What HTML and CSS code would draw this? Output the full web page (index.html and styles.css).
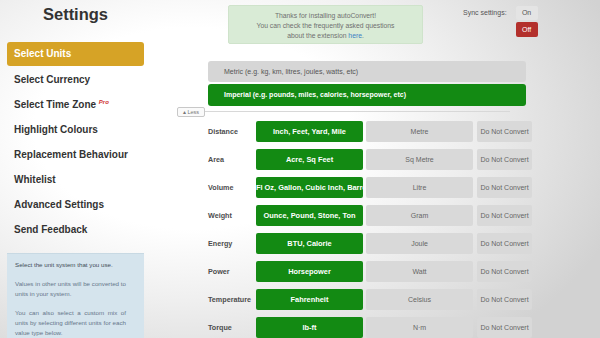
FILE: index.html
```html
<!DOCTYPE html>
<html lang="en">
<head>
  <meta charset="UTF-8">
  <meta name="viewport" content="width=device-width, initial-scale=1.0">
  <title>autoConvert Settings</title>
  <link rel="stylesheet" href="styles.css">
</head>
<body>
  <div class="page">
    <aside class="sidebar">
      <h1>Settings</h1>
      <nav class="menu">
        <a class="menu-item active">Select Units</a>
        <a class="menu-item">Select Currency</a>
        <a class="menu-item">Select Time Zone <sup class="pro">Pro</sup></a>
        <a class="menu-item">Highlight Colours</a>
        <a class="menu-item">Replacement Behaviour</a>
        <a class="menu-item">Whitelist</a>
        <a class="menu-item">Advanced Settings</a>
        <a class="menu-item">Send Feedback</a>
      </nav>
      <div class="help">
        <p class="help-lead">Select the unit system that you use.</p>
        <p>Values in other units will be converted to units in your system.</p>
        <p>You can also select a custom mix of units by selecting different units for each value type below.</p>
      </div>
    </aside>

    <main class="content">
      <div class="topbar">
        <div class="notice">
          Thanks for installing autoConvert!<br>
          You can check the frequently asked questions<br>
          about the extension <a href="#">here</a>.
        </div>
        <div class="sync">
          <span class="sync-label">Sync settings:</span>
          <div class="toggle">
            <span class="toggle-btn">On</span>
            <span class="toggle-btn off">Off</span>
          </div>
        </div>
      </div>

      <div class="systems">
        <div class="system">Metric (e.g. kg, km, litres, joules, watts, etc)</div>
        <div class="system selected">Imperial (e.g. pounds, miles, calories, horsepower, etc)</div>
      </div>

      <div class="divider">
        <span class="less">&#9652; Less</span>
        <span class="rule"></span>
      </div>

      <div class="units">
        <div class="unit-row">
          <span class="unit-label">Distance</span>
          <span class="opt selected">Inch, Feet, Yard, Mile</span>
          <span class="opt">Metre</span>
          <span class="opt none">Do Not Convert</span>
        </div>
        <div class="unit-row">
          <span class="unit-label">Area</span>
          <span class="opt selected">Acre, Sq Feet</span>
          <span class="opt">Sq Metre</span>
          <span class="opt none">Do Not Convert</span>
        </div>
        <div class="unit-row">
          <span class="unit-label">Volume</span>
          <span class="opt selected">Fl Oz, Gallon, Cubic Inch, Barrel</span>
          <span class="opt">Litre</span>
          <span class="opt none">Do Not Convert</span>
        </div>
        <div class="unit-row">
          <span class="unit-label">Weight</span>
          <span class="opt selected">Ounce, Pound, Stone, Ton</span>
          <span class="opt">Gram</span>
          <span class="opt none">Do Not Convert</span>
        </div>
        <div class="unit-row">
          <span class="unit-label">Energy</span>
          <span class="opt selected">BTU, Calorie</span>
          <span class="opt">Joule</span>
          <span class="opt none">Do Not Convert</span>
        </div>
        <div class="unit-row">
          <span class="unit-label">Power</span>
          <span class="opt selected">Horsepower</span>
          <span class="opt">Watt</span>
          <span class="opt none">Do Not Convert</span>
        </div>
        <div class="unit-row">
          <span class="unit-label">Temperature</span>
          <span class="opt selected">Fahrenheit</span>
          <span class="opt">Celsius</span>
          <span class="opt none">Do Not Convert</span>
        </div>
        <div class="unit-row">
          <span class="unit-label">Torque</span>
          <span class="opt selected">lb-ft</span>
          <span class="opt">N·m</span>
          <span class="opt none">Do Not Convert</span>
        </div>
      </div>
    </main>
  </div>
</body>
</html>
```

FILE: styles.css
```css
/* General Styles */
html, body {
  margin: 0;
  height: 100%;
}

body {
  font-family: 'Liberation Sans', Arial, sans-serif;
  background: radial-gradient(ellipse 75% 85% at 32% 38%, #ffffff 35%, #efefef 60%, #d2d2d2 100%);
  color: #333;
  overflow: hidden;
}

.page {
  display: flex;
  width: 600px;
  height: 338px;
  overflow: hidden;
}

/* Sidebar */
.sidebar {
  width: 137px;
  padding-left: 7px;
  flex-shrink: 0;
}

h1 {
  margin: 0;
  padding-top: 4px;
  font-size: 16.5px;
  line-height: 20px;
  text-align: center;
  color: #333;
}

.menu {
  display: flex;
  flex-direction: column;
  margin-top: 18px;
}

.menu-item {
  height: 25px;
  line-height: 25px;
  padding-left: 7px;
  font-size: 10px;
  font-weight: bold;
  color: #333;
  border-radius: 3px;
}

.menu-item.active {
  height: 24px;
  line-height: 24px;
  margin-bottom: 1px;
  background: #d6a326;
  color: #fff;
}

.pro {
  font-size: 6px;
  line-height: 0;
  font-style: italic;
  color: #d0322f;
  vertical-align: 4px;
}

.help {
  margin-top: 11px;
  padding: 6px 18px 10px 8px;
  background: #d5e4ed;
  border-top: 1px solid #c8d9e3;
  font-size: 6.2px;
  line-height: 10px;
  text-align: justify;
  color: #66768a;
}

.help p {
  margin: 0 0 9px;
}

.help-lead {
  color: #3f4c57;
  text-align: left;
}

/* Main content */
.content {
  margin-left: 33px;
  flex: 1;
}

.topbar {
  display: flex;
  height: 61px;
}

.notice {
  margin: 5px 0 0 51px;
  width: 195px;
  height: 39px;
  box-sizing: border-box;
  padding-top: 5px;
  background: #d9ebd6;
  border: 1px solid #cfe3cb;
  border-radius: 2px;
  font-size: 6.8px;
  line-height: 10px;
  text-align: center;
  color: #707070;
}

.notice a {
  color: #3b7fc4;
  text-decoration: none;
}

.sync {
  display: flex;
  margin: 6px 0 0 40px;
  font-size: 7px;
  color: #555;
}

.sync-label {
  margin-top: 3px;
}

.toggle {
  display: flex;
  flex-direction: column;
  gap: 2px;
  margin-left: 9px;
}

.toggle-btn {
  width: 22px;
  height: 14px;
  line-height: 14px;
  text-align: center;
  background: #e4e4e4;
  border-radius: 2px;
  color: #555;
}

.toggle-btn.off {
  height: 15px;
  line-height: 15px;
  background: #b3302c;
  color: #fff;
}

.systems {
  display: flex;
  flex-direction: column;
  gap: 2px;
  margin-left: 31px;
  width: 318px;
}

.system {
  height: 21px;
  line-height: 21px;
  padding-left: 16px;
  background: #d6d6d6;
  border-radius: 3px;
  font-size: 7px;
  color: #555;
}

.system.selected {
  height: 22px;
  line-height: 22px;
  background: #138a13;
  color: #fff;
  font-weight: bold;
}

.divider {
  display: flex;
  align-items: center;
  height: 11px;
}

.less {
  width: 26px;
  height: 8px;
  line-height: 8px;
  border: 1px solid #c8c8c8;
  border-radius: 2px;
  font-size: 5.5px;
  color: #777;
  text-align: center;
  background: #fafafa;
}

.rule {
  width: 305px;
  height: 1px;
  background: #d8d8d8;
}

.units {
  display: flex;
  flex-direction: column;
  gap: 7px;
  margin: 4px 0 0 31px;
}

.unit-row {
  display: flex;
  height: 21px;
  align-items: center;
}

.unit-label {
  width: 48px;
  font-size: 7.2px;
  font-weight: bold;
  color: #4d4d4d;
  white-space: nowrap;
}

.opt {
  width: 107px;
  height: 21px;
  line-height: 21px;
  margin-right: 3px;
  overflow: hidden;
  white-space: nowrap;
  text-align: center;
  background: #d9d9d9;
  border-radius: 2px;
  font-size: 7px;
  color: #666;
}

.opt.selected {
  background: #138a13;
  color: #fff;
  font-weight: bold;
  font-size: 7.4px;
}

.opt.none {
  width: 55px;
  margin-left: 1px;
}
```
